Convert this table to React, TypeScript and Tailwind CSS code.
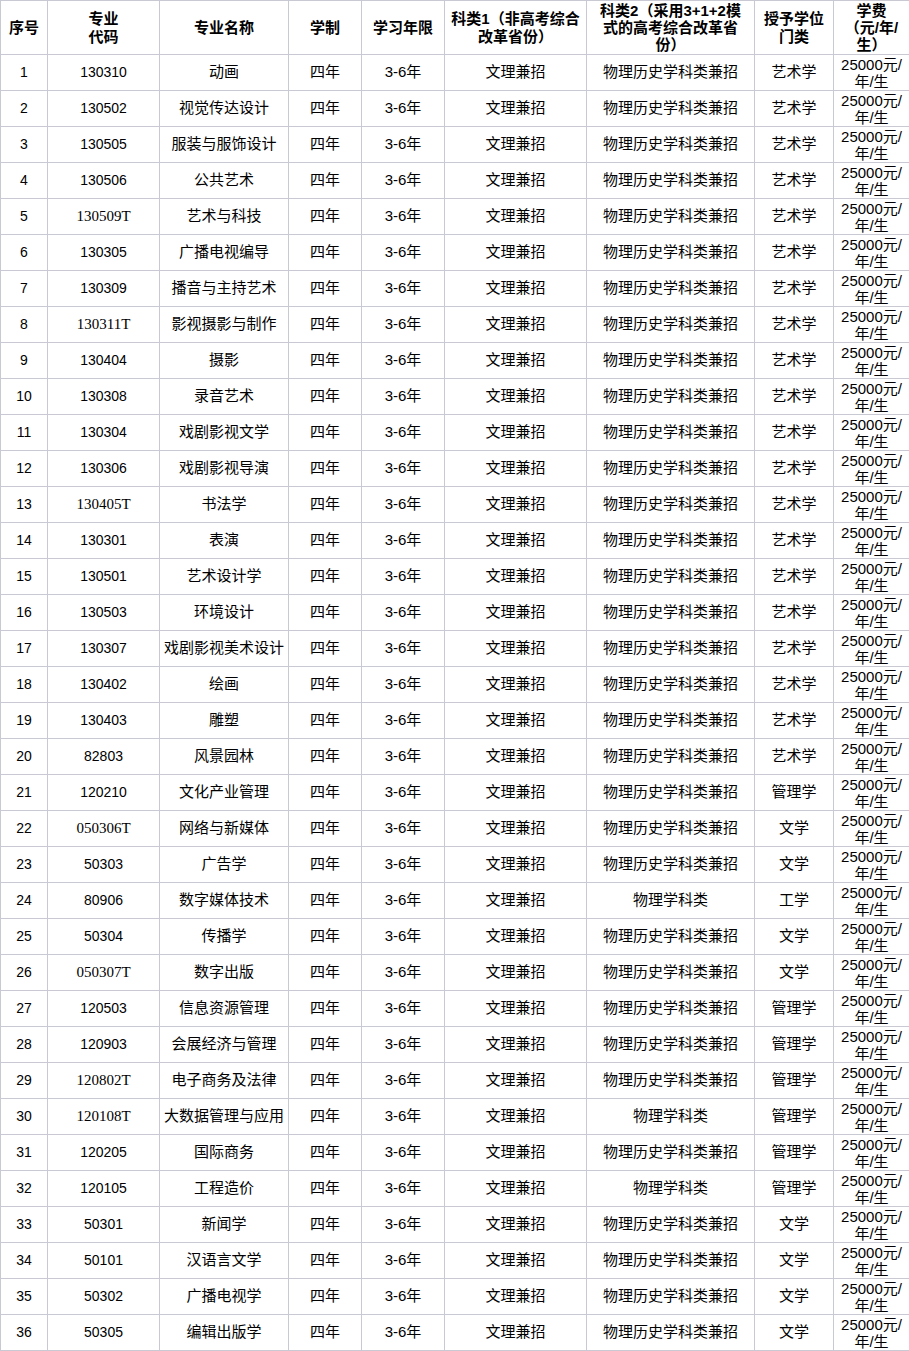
import React from 'react';

type Row = [string, string, string?, string?];

// [代码, 名称, 科类2, 门类]
const rows: Row[] = [
  ['130310', '动画'],
  ['130502', '视觉传达设计'],
  ['130505', '服装与服饰设计'],
  ['130506', '公共艺术'],
  ['130509T', '艺术与科技'],
  ['130305', '广播电视编导'],
  ['130309', '播音与主持艺术'],
  ['130311T', '影视摄影与制作'],
  ['130404', '摄影'],
  ['130308', '录音艺术'],
  ['130304', '戏剧影视文学'],
  ['130306', '戏剧影视导演'],
  ['130405T', '书法学'],
  ['130301', '表演'],
  ['130501', '艺术设计学'],
  ['130503', '环境设计'],
  ['130307', '戏剧影视美术设计'],
  ['130402', '绘画'],
  ['130403', '雕塑'],
  ['82803', '风景园林'],
  ['120210', '文化产业管理', undefined, '管理学'],
  ['050306T', '网络与新媒体', undefined, '文学'],
  ['50303', '广告学', undefined, '文学'],
  ['80906', '数字媒体技术', '物理学科类', '工学'],
  ['50304', '传播学', undefined, '文学'],
  ['050307T', '数字出版', undefined, '文学'],
  ['120503', '信息资源管理', undefined, '管理学'],
  ['120903', '会展经济与管理', undefined, '管理学'],
  ['120802T', '电子商务及法律', undefined, '管理学'],
  ['120108T', '大数据管理与应用', '物理学科类', '管理学'],
  ['120205', '国际商务', undefined, '管理学'],
  ['120105', '工程造价', '物理学科类', '管理学'],
  ['50301', '新闻学', undefined, '文学'],
  ['50101', '汉语言文学', undefined, '文学'],
  ['50302', '广播电视学', undefined, '文学'],
  ['50305', '编辑出版学', undefined, '文学'],
];

const cell = 'border border-[#c9c9d3] text-center align-middle p-0';

const App: React.FC = () => {
  return (
    <div className="w-[909px] bg-white text-black font-['Liberation_Sans','Noto_Sans_CJK_SC',sans-serif] text-[15px]">
      <table className="w-[909px] table-fixed border-collapse">
        <colgroup>
          <col className="w-[47px]" />
          <col className="w-[112px]" />
          <col className="w-[129px]" />
          <col className="w-[73px]" />
          <col className="w-[83px]" />
          <col className="w-[142px]" />
          <col className="w-[168px]" />
          <col className="w-[79px]" />
          <col className="w-[76px]" />
        </colgroup>
        <thead>
          <tr className="h-[54px] font-bold leading-[18px]">
            <th className={cell}>序号</th>
            <th className={cell}>
              专业
              <br />
              代码
            </th>
            <th className={cell}>专业名称</th>
            <th className={cell}>学制</th>
            <th className={cell}>学习年限</th>
            <th className={cell}>
              科类1（非高考综合
              <br />
              改革省份）
            </th>
            <th className={`${cell} leading-[17px]`}>
              科类2（采用3+1+2模
              <br />
              式的高考综合改革省
              <br />
              份）
            </th>
            <th className={cell}>
              授予学位
              <br />
              门类
            </th>
            <th className={`${cell} leading-[17px]`}>
              学费
              <br />
              （元/年/
              <br />
              生）
            </th>
          </tr>
        </thead>
        <tbody>
          {rows.map(([code, name, kelei2, menlei], i) => (
            <tr key={code} className="h-[36px]">
              <td className={`${cell} text-[14px]`}>{i + 1}</td>
              <td className={`${cell} text-[14px]`}>
                {code.endsWith('T') ? (
                  <span className="font-['Liberation_Serif',serif] text-[15px]">{code}</span>
                ) : (
                  code
                )}
              </td>
              <td className={cell}>{name}</td>
              <td className={cell}>四年</td>
              <td className={cell}>3-6年</td>
              <td className={cell}>文理兼招</td>
              <td className={cell}>{kelei2 ?? '物理历史学科类兼招'}</td>
              <td className={cell}>{menlei ?? '艺术学'}</td>
              <td className={`${cell} leading-[17px]`}>
                25000元/
                <br />
                年/生
              </td>
            </tr>
          ))}
        </tbody>
      </table>
    </div>
  );
};

export default App;
